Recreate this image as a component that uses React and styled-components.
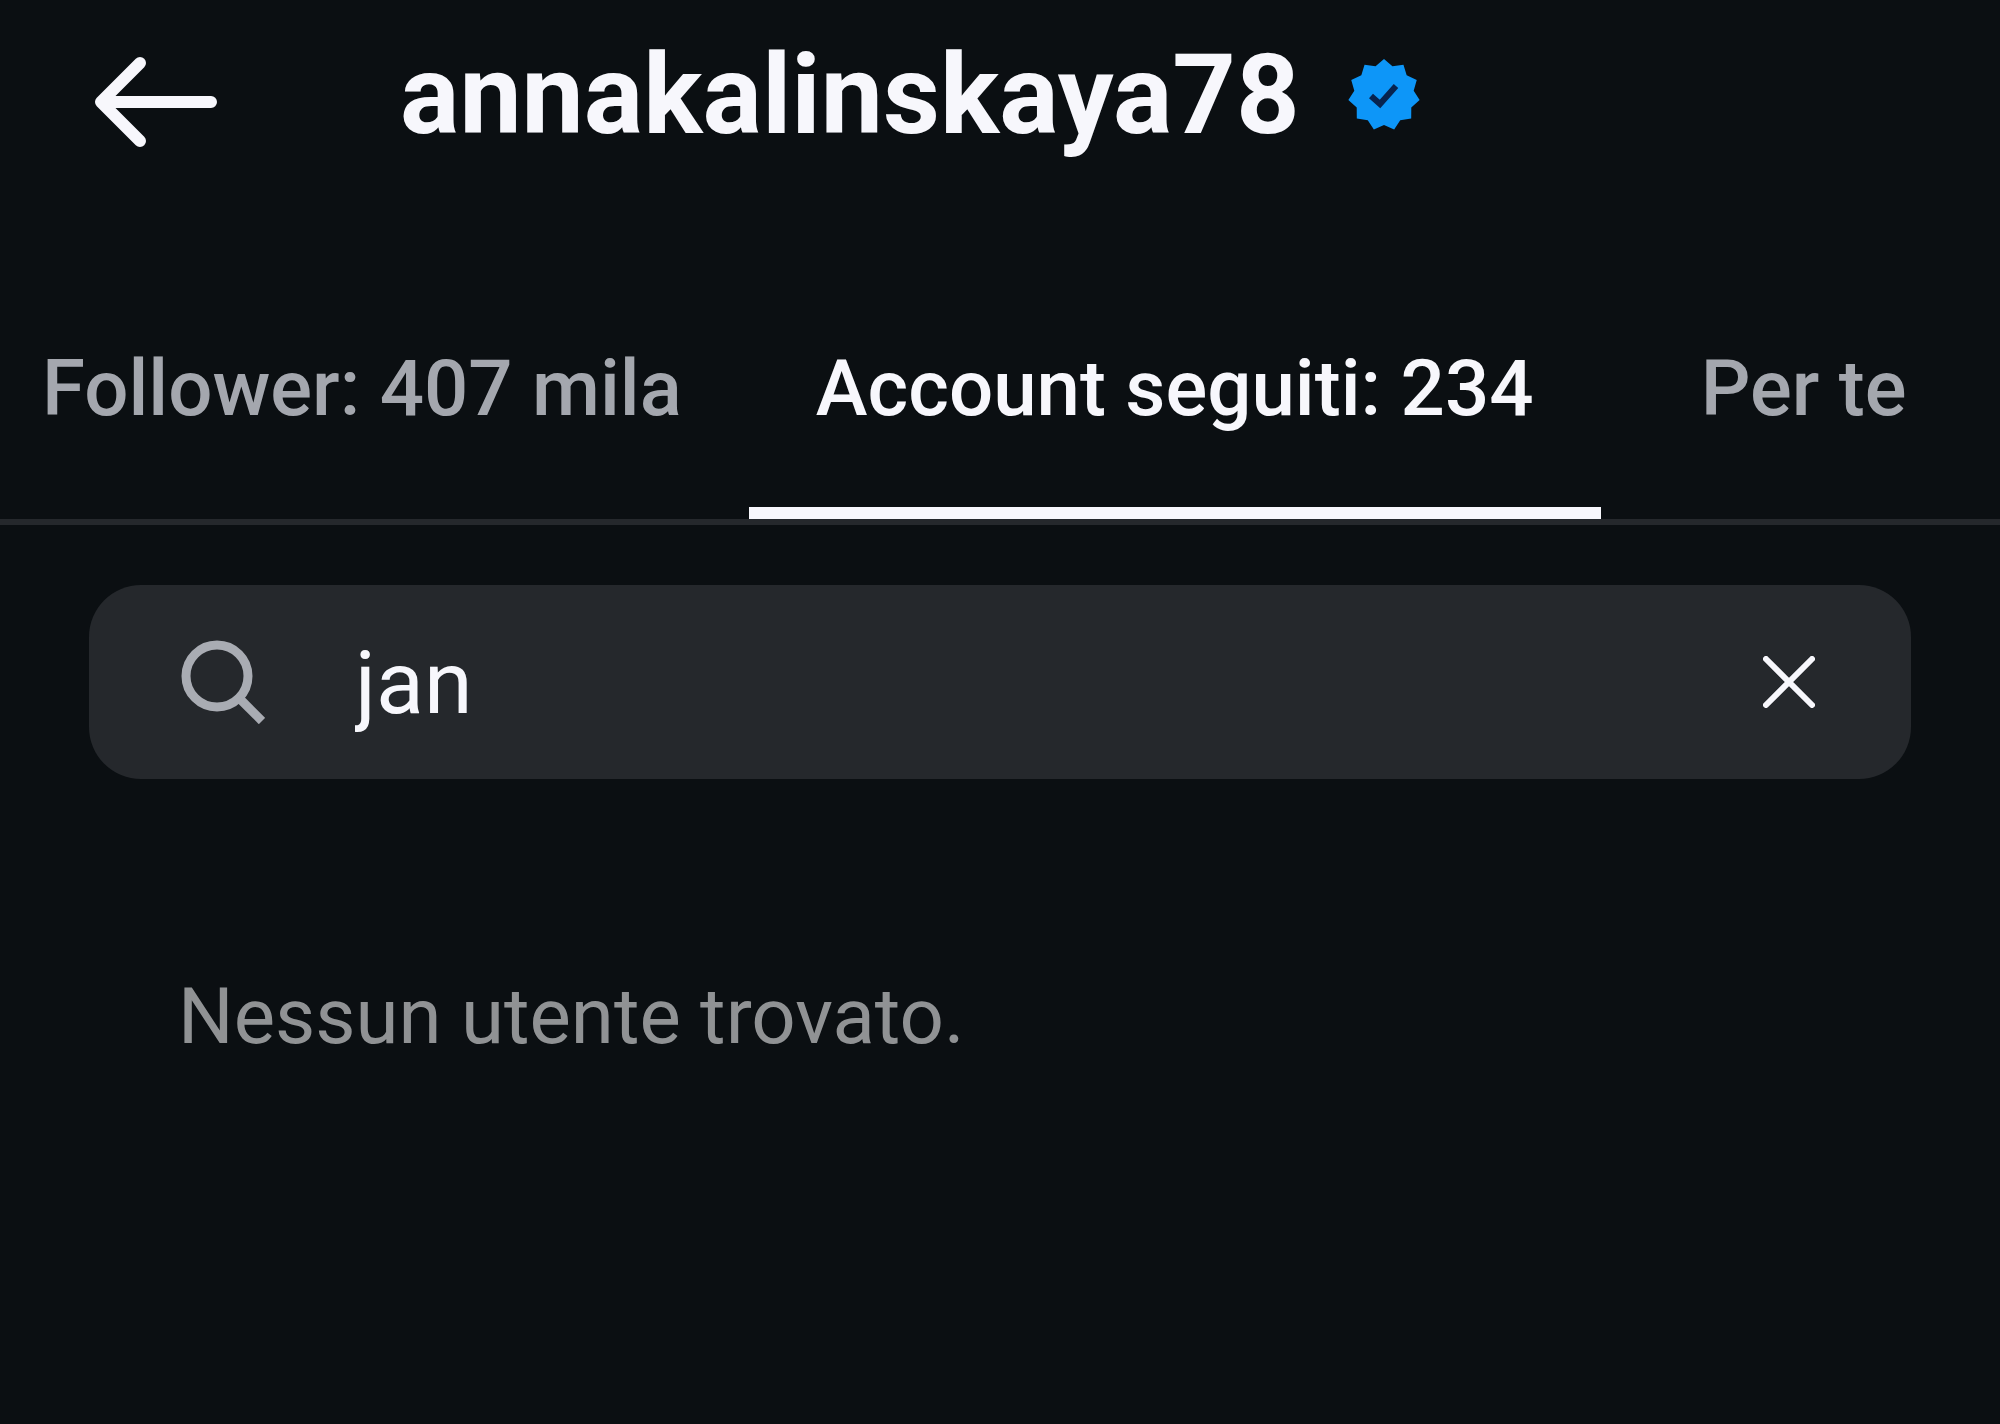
import React, { useState } from "react";
import styled, { createGlobalStyle } from "styled-components";

const tabs = [
  { id: "followers", label: "Follower: 407 mila" },
  { id: "following", label: "Account seguiti: 234" },
  { id: "suggested", label: "Per te" },
];

const badgePoints = Array.from({ length: 22 }, (_, i) => {
  const radius = i % 2 === 0 ? 36 : 30;
  const angle = (i * Math.PI) / 11;
  return `${36 + radius * Math.sin(angle)},${36 - radius * Math.cos(angle)}`;
}).join(" ");

const BackIcon = () => (
  <svg width="124" height="92" viewBox="0 0 124 92" aria-hidden="true">
    <path
      d="M46 7 L7 46 L46 85 M9 46 H117"
      fill="none"
      stroke="currentColor"
      strokeWidth="12"
      strokeLinecap="round"
      strokeLinejoin="round"
    />
  </svg>
);

const VerifiedIcon = () => (
  <svg width="72" height="72" viewBox="0 0 72 72" role="img" aria-label="Verificato">
    <polygon points={badgePoints} fill="#0d96f8" />
    <path d="M23 37 L32 45 L48 27" fill="none" stroke="#07234f" strokeWidth="6" />
  </svg>
);

const SearchIcon = () => (
  <svg width="84" height="84" viewBox="0 0 84 84" aria-hidden="true">
    <g fill="none" stroke="currentColor" strokeWidth="9">
      <circle cx="36" cy="36" r="31" />
      <path d="M58 58 L81 81" />
    </g>
  </svg>
);

const ClearIcon = () => (
  <svg width="52" height="52" viewBox="0 0 52 52" aria-hidden="true">
    <path
      d="M3 3 L49 49 M49 3 L3 49"
      fill="none"
      stroke="currentColor"
      strokeWidth="6"
      strokeLinecap="round"
    />
  </svg>
);

const App = () => {
  const [activeTab, setActiveTab] = useState("following");
  const [query, setQuery] = useState("jan");

  return (
    <Page>
      <GlobalStyle />
      <Header>
        <IconButton type="button" aria-label="Indietro">
          <BackIcon />
        </IconButton>
        <Profile>
          <Username>annakalinskaya78</Username>
          <VerifiedIcon />
        </Profile>
      </Header>
      <Tabs role="tablist">
        {tabs.map((tab) => (
          <Tab
            key={tab.id}
            type="button"
            role="tab"
            aria-selected={tab.id === activeTab}
            $active={tab.id === activeTab}
            onClick={() => setActiveTab(tab.id)}
          >
            {tab.label}
          </Tab>
        ))}
      </Tabs>
      <main>
        <SearchBar>
          <SearchLabel htmlFor="search" aria-label="Cerca">
            <SearchIcon />
          </SearchLabel>
          <SearchInput
            id="search"
            type="text"
            autoComplete="off"
            spellCheck={false}
            value={query}
            onChange={(e) => setQuery(e.target.value)}
          />
          <IconButton type="button" aria-label="Cancella" onClick={() => setQuery("")}>
            <ClearIcon />
          </IconButton>
        </SearchBar>
        <EmptyMessage>Nessun utente trovato.</EmptyMessage>
      </main>
    </Page>
  );
};

export default App;

const GlobalStyle = createGlobalStyle`
  * {
    box-sizing: border-box;
  }
  body {
    margin: 0;
    background-color: #0b0f12;
  }
  button,
  input {
    font-family: inherit;
  }
`;

const Page = styled.div`
  min-height: 100vh;
  overflow: hidden;
  background-color: #0b0f12;
  color: #f7f7fc;
  font-family: Roboto, sans-serif;
`;

const Header = styled.header`
  display: flex;
  align-items: center;
  gap: 182px;
  height: 204px;
  padding: 0 94px;
`;

const Profile = styled.div`
  display: flex;
  align-items: center;
  gap: 48px;
  padding-bottom: 14px;
  svg {
    flex: none;
  }
`;

const IconButton = styled.button`
  display: flex;
  flex: none;
  padding: 0;
  border: none;
  background: none;
  color: inherit;
  cursor: pointer;
`;

const Username = styled.h1`
  margin: 0;
  font-size: 111px;
  font-weight: 700;
  line-height: 132px;
`;

const Tabs = styled.div`
  display: flex;
  height: 321px;
  border-bottom: 6px solid #25282c;
`;

const Tab = styled.button`
  flex: none;
  padding: 66px 67px 0;
  border: none;
  border-bottom: 12px solid ${({ $active }) => ($active ? "#f7f7fc" : "transparent")};
  background: none;
  color: ${({ $active }) => ($active ? "#f7f7fc" : "#a4a7ae")};
  font-size: 78px;
  font-weight: 500;
  line-height: 92px;
  white-space: nowrap;
  cursor: pointer;
  &:first-child {
    padding-left: 42px;
  }
  &:last-child {
    flex: 1 0 406px;
  }
`;

const SearchBar = styled.div`
  display: flex;
  align-items: center;
  height: 194px;
  margin: 60px 89px 0;
  padding: 0 96px 0 92px;
  border-radius: 52px;
  background-color: #25282c;
`;

const SearchLabel = styled.label`
  display: flex;
  margin-right: 90px;
  color: #a9acb3;
`;

const SearchInput = styled.input`
  flex: 1;
  min-width: 0;
  padding: 2px 0 0;
  border: none;
  outline: none;
  background: none;
  color: inherit;
  font-size: 88px;
  line-height: 100px;
`;

const EmptyMessage = styled.p`
  margin: 192px 178px 0;
  color: #909294;
  font-size: 78px;
  line-height: 92px;
`;
